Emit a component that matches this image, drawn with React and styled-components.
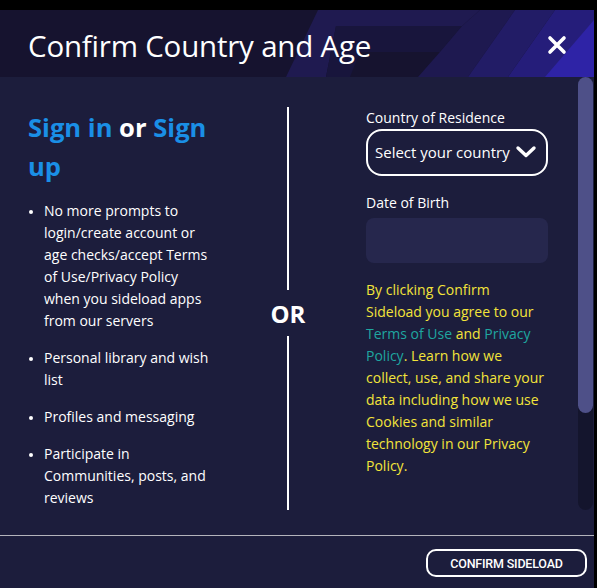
import React from "react";
import styled, { createGlobalStyle } from "styled-components";

const Global = createGlobalStyle`
  html, body { margin: 0; padding: 0; background: #000; }
  body { font-family: "Open Sans", "Noto Sans", sans-serif; color: #fff; }
  * { box-sizing: border-box; }
`;

const Modal = styled.div`
  width: 594px;
  margin-top: 10px;
  background: #1c1d3c;
  display: flex;
  flex-direction: column;
`;

const Header = styled.header`
  position: relative;
  height: 67px;
  background: #16132f;
  display: flex;
  align-items: center;
  justify-content: space-between;
  padding: 3px 26px 0 28px;
  overflow: hidden;
`;

const HeaderArt = styled.svg`
  position: absolute;
  inset: 0;
  width: 100%;
  height: 100%;
`;

const Title = styled.h1`
  position: relative;
  margin: 0;
  font-size: 29.5px;
  font-weight: 400;
  letter-spacing: -0.2px;
  color: #fff;
`;

const Close = styled.button`
  position: relative;
  background: none;
  border: 0;
  padding: 0;
  width: 22px;
  height: 22px;
  display: flex;
  align-items: center;
  justify-content: center;
  cursor: pointer;
`;

const Body = styled.div`
  position: relative;
  height: 458px;
  padding: 30px 0 0 28px;
  display: grid;
  grid-template-columns: 186px 152px 182px;
  align-items: start;
`;

const Left = styled.section`
  display: flex;
  flex-direction: column;
`;

const SignTitle = styled.h2`
  margin: 1px 0 14px;
  font-size: 25.6px;
  font-weight: 700;
  line-height: 39px;
  color: #fff;
`;

const Blue = styled.span`
  color: #1a8fe6;
`;

const Perks = styled.ul`
  margin: 0;
  padding: 0 0 0 16px;
  font-size: 14px;
  line-height: 22px;
  color: #fff;
  li + li { margin-top: 15px; }
  li::marker { font-size: 12px; }
`;

const Divider = styled.div`
  display: flex;
  flex-direction: column;
  align-items: center;
  padding-right: 4px;
`;

const Rule = styled.div`
  width: 2px;
  height: ${p => p.$h}px;
  background: #fff;
`;

const Or = styled.div`
  height: 46px;
  display: flex;
  align-items: center;
  font-size: 24px;
  font-weight: 700;
  color: #fff;
`;

const Right = styled.section`
  display: flex;
  flex-direction: column;
`;

const Label = styled.label`
  font-size: 14px;
  line-height: 22px;
  color: #fff;
  margin-top: ${p => p.$mt || 0}px;
  margin-bottom: ${p => p.$mb || 0}px;
`;

const Select = styled.div`
  height: 47px;
  border: 2px solid #fff;
  border-radius: 16px;
  display: flex;
  align-items: center;
  justify-content: space-between;
  padding: 0 9px 2px 7px;
  font-size: 15px;
  color: #fff;
  white-space: nowrap;
`;

const DateInput = styled.div`
  height: 45px;
  border-radius: 8px;
  background: #26274d;
`;

const Legal = styled.p`
  margin: 16px 0 0;
  font-size: 14px;
  line-height: 22px;
  color: #f3e43a;
`;

const Link = styled.a`
  color: #1fa6a0;
  text-decoration: none;
`;

const Track = styled.div`
  position: absolute;
  top: 0;
  right: 1px;
  width: 15px;
  height: 433px;
  border-radius: 8px;
  background: #14152d;
`;

const Thumb = styled.div`
  width: 15px;
  height: 336px;
  border-radius: 8px;
  background: #4e5088;
`;

const Footer = styled.footer`
  border-top: 1px solid #b4b4bc;
  height: 53px;
  display: flex;
  justify-content: flex-end;
  align-items: flex-start;
  padding: 13px 7px 0 0;
`;

const Confirm = styled.button`
  width: 161px;
  height: 28px;
  border: 2px solid #fff;
  border-radius: 10px;
  background: transparent;
  color: #fff;
  font-family: Roboto, sans-serif;
  font-weight: 500;
  font-size: 12.5px;
  letter-spacing: -0.2px;
  cursor: pointer;
`;

export default function App() {
  return (
    <>
      <Global />
      <Modal>
        <Header>
          <HeaderArt viewBox="0 0 594 67" preserveAspectRatio="none">
            <polygon points="286,67 318,0 480,0 462,16 336,16 326,67" fill="#1f1a50" />
            <polygon points="326,67 336,16 462,16 440,42 360,42 350,67" fill="#18153c" />
            <polygon points="440,42 462,16 480,0 515,0 468,67 418,67" fill="#1e1950" />
            <polygon points="468,67 515,0 555,0 508,67" fill="#221c66" />
            <polygon points="508,67 555,0 594,0 594,67" fill="#251d7a" />
            <polygon points="545,67 594,10 594,67" fill="#2e23a6" />
          </HeaderArt>
          <Title>Confirm Country and Age</Title>
          <Close aria-label="Close">
            <svg width="20" height="20" viewBox="0 0 20 20">
              <path d="M3 3 L17 17 M17 3 L3 17" stroke="#fff" strokeWidth="3.6" strokeLinecap="round" />
            </svg>
          </Close>
        </Header>
        <Body>
          <Left>
            <SignTitle>
              <Blue>Sign in</Blue> or <Blue>Sign up</Blue>
            </SignTitle>
            <Perks>
              <li>No more prompts to login/create account or age checks/accept Terms of Use/Privacy Policy when you sideload apps from our servers</li>
              <li>Personal library and wish list</li>
              <li>Profiles and messaging</li>
              <li>Participate in Communities, posts, and reviews</li>
            </Perks>
          </Left>
          <Divider>
            <Rule $h={183} />
            <Or>OR</Or>
            <Rule $h={174} />
          </Divider>
          <Right>
            <Label>Country of Residence</Label>
            <Select>
              <span>Select your country</span>
              <svg width="22" height="14" viewBox="0 0 22 14">
                <path d="M3 3 L11 10.5 L19 3" stroke="#fff" strokeWidth="3.4" fill="none" strokeLinecap="round" strokeLinejoin="round" />
              </svg>
            </Select>
            <Label $mt={16} $mb={4}>Date of Birth</Label>
            <DateInput />
            <Legal>
              By clicking Confirm Sideload you agree to our <Link href="#">Terms of Use</Link> and{" "}
              <Link href="#">Privacy Policy</Link>. Learn how we collect, use, and share your data including how we use Cookies and similar technology in our Privacy Policy.
            </Legal>
          </Right>
          <Track>
            <Thumb />
          </Track>
        </Body>
        <Footer>
          <Confirm>CONFIRM SIDELOAD</Confirm>
        </Footer>
      </Modal>
    </>
  );
}
